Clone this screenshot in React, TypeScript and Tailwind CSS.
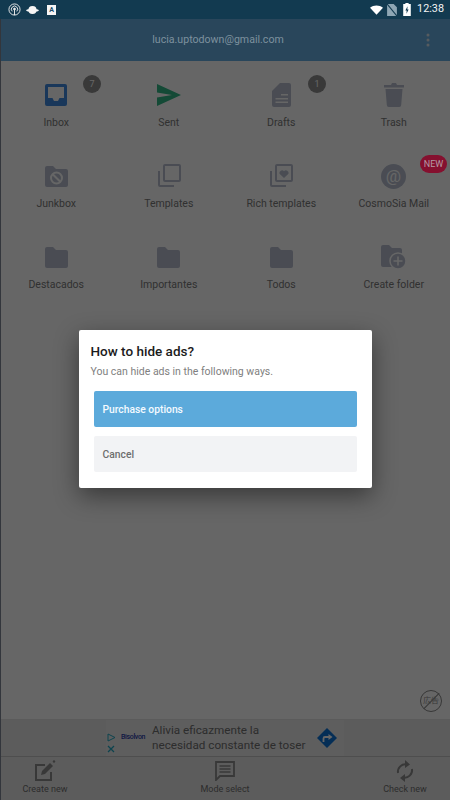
import type { ReactNode } from 'react';

const G = '#b8bfd0';

function InboxIcon() {
  return (
    <svg width="24" height="24" viewBox="0 0 24 24">
      <path fill="#3f8ae0" fillRule="evenodd" d="M3 1h18a2 2 0 0 1 2 2v18a2 2 0 0 1-2 2H3a2 2 0 0 1-2-2V3a2 2 0 0 1 2-2zM4 4v11h4.500l1.500 3h4l1.500-3H20V4z" />
    </svg>
  );
}

function SentIcon() {
  return (
    <svg width="24" height="22" viewBox="0 0 24 22">
      <path fill="#34b987" d="M0 0l24 11L0 22v-8.500L15 11 0 8.500z" />
    </svg>
  );
}

function DraftIcon() {
  return (
    <svg width="19" height="24" viewBox="0 0 19 24">
      <path fill={G} fillRule="evenodd" d="M8 0h9a2 2 0 0 1 2 2v20a2 2 0 0 1-2 2H2a2 2 0 0 1-2-2V8zM9 11v1.500h7V11zM3.500 15v1.500H16V15zM3.500 18.500V20H16v-1.500z" />
    </svg>
  );
}

function TrashIcon() {
  return (
    <svg width="20" height="24" viewBox="0 0 20 24">
      <path fill={G} d="M8 0h4l1 2h7v2.500H0V2h7zM1.500 6h17l-1.300 16a2 2 0 0 1-2 2H4.800a2 2 0 0 1-2-2z" />
    </svg>
  );
}

function FolderIcon() {
  return (
    <svg width="23" height="21" viewBox="0 0 23 21">
      <path fill={G} d="M2 0h6l3 3h10a2 2 0 0 1 2 2v14a2 2 0 0 1-2 2H2a2 2 0 0 1-2-2V2a2 2 0 0 1 2-2z" />
    </svg>
  );
}

function JunkIcon() {
  return (
    <svg width="23" height="21" viewBox="0 0 23 21">
      <path fill={G} d="M2 0h6l3 3h10a2 2 0 0 1 2 2v14a2 2 0 0 1-2 2H2a2 2 0 0 1-2-2V2a2 2 0 0 1 2-2z" />
      <circle cx="11.500" cy="12" r="5.500" fill="none" stroke="#ffffff" strokeWidth="2" />
      <path stroke="#ffffff" strokeWidth="2" d="M7.700 8.200l7.600 7.600" />
    </svg>
  );
}

function TemplateIcon({ heart }: { heart?: boolean }) {
  return (
    <svg width="24" height="24" viewBox="0 0 24 24" fill="none" stroke={G} strokeWidth="2">
      <rect x="7" y="1" width="16" height="16" rx="1" />
      <path d="M2 7v14a1 1 0 0 0 1 1h14" />
      {heart && <path fill={G} stroke="none" d="M15 14l-4.500-4.300a2.600 2.600 0 0 1 4.500-2.400 2.600 2.600 0 0 1 4.500 2.400z" />}
    </svg>
  );
}

function AtIcon() {
  return (
    <svg width="25" height="25" viewBox="0 0 25 25">
      <circle cx="12.500" cy="12.500" r="12.500" fill={G} />
      <text x="12.500" y="18" textAnchor="middle" fontSize="17" fontFamily="Roboto, sans-serif" fill="#ffffff">@</text>
    </svg>
  );
}

function CreateFolderIcon() {
  return (
    <svg width="25" height="24" viewBox="0 0 25 24">
      <path fill={G} d="M2 0h6l3 3h8a2 2 0 0 1 2 2v15a2 2 0 0 1-2 2H2a2 2 0 0 1-2-2V2a2 2 0 0 1 2-2z" />
      <circle cx="17" cy="16" r="8" fill={G} stroke="#ffffff" strokeWidth="1.500" />
      <path stroke="#ffffff" strokeWidth="1.600" d="M17 11.500v9M12.500 16h9" />
    </svg>
  );
}

function MailTile({ icon, label, badge, isNew }: { icon: ReactNode; label: string; badge?: string; isNew?: boolean }) {
  return (
    <div className="relative h-[81px] flex flex-col items-center">
      <div className="h-[28px] mt-[20px] flex items-center justify-center">{icon}</div>
      <span className="mt-[7px] text-[10.500px] leading-[14px] text-[#7a7a7a] whitespace-nowrap">{label}</span>
      {badge && (
        <span className="absolute left-[83px] top-[14px] w-[18px] h-[18px] rounded-full bg-[#8e8e8e] text-[#ffffff] text-[9px] leading-[18px] text-center">
          {badge}
        </span>
      )}
      {isNew && (
        <span className="absolute z-20 right-[3px] top-[13px] w-[27px] h-[18px] rounded-full bg-[#85102f] text-[#b59aa4] text-[9px] leading-[18px] text-center">
          NEW
        </span>
      )}
    </div>
  );
}

function BottomButton({ icon, label }: { icon: ReactNode; label: string }) {
  return (
    <div className="w-[90px] flex flex-col items-center">
      <div className="h-[24px] flex items-center justify-center">{icon}</div>
      <span className="text-[9px] leading-[12px] text-[#707070] whitespace-nowrap">{label}</span>
    </div>
  );
}

function StatusBar() {
  return (
    <div className="relative z-20 h-[19px] bg-[#123a50] flex items-center justify-between pl-[8px] pr-[6px]">
      <div className="flex items-center">
        <svg width="13" height="13" viewBox="0 0 14 14" fill="none" stroke="#f0f0f0">
          <circle cx="7" cy="7" r="6" />
          <path d="M4.500 9a3.400 3.400 0 1 1 5 0M7 7v6" />
          <circle cx="7" cy="6.500" r="1" fill="#f0f0f0" />
        </svg>
        <svg className="ml-[5px]" width="13" height="10" viewBox="0 0 14 11">
          <ellipse cx="7" cy="5.500" rx="4.500" ry="4.500" fill="#f5f5f5" />
          <ellipse cx="7" cy="6" rx="7" ry="1.700" fill="#f5f5f5" />
        </svg>
        <span className="ml-[8px] w-[9px] h-[10px] bg-[#f5f5f5] text-[#1b4a68] text-[7px] leading-[10px] font-bold text-center">A</span>
      </div>
      <div className="flex items-center">
        <svg width="13" height="10" viewBox="0 0 14 10">
          <path fill="#ffffff" d="M0 2.500C4-.8 10-.8 14 2.500L7 10z" />
        </svg>
        <svg className="ml-[4px]" width="10" height="12" viewBox="0 0 9 11">
          <path fill="#8ea6b4" d="M0 0h6l3 3v8H0z" />
          <path stroke="#123a50" strokeWidth="1" d="M0 0l9 11" />
        </svg>
        <svg className="ml-[6px]" width="8" height="13" viewBox="0 0 7 12">
          <path fill="#ffffff" d="M2 0h3v1h2v11H0V1h2z" />
          <path fill="#123a50" d="M4 3L2 7h1.200L3 10l2-4H3.800z" />
        </svg>
        <span className="ml-[6px] text-[#f4f4f4] text-[10.800px] leading-none">12:38</span>
      </div>
    </div>
  );
}

function AdBanner() {
  return (
    <div className="h-[38px] border-t border-[#e4e4e4] border-b border-b-[#c4c4c4] bg-[#e6e6e6] flex justify-center">
      <div className="w-[238px] bg-[#ebebeb] flex items-center">
        <div className="w-[8px] ml-[1px] flex flex-col items-center">
          <svg className="mt-[10px]" width="9" height="9" viewBox="0 0 9 9" fill="none" stroke="#22a9c4">
            <path d="M1 1l7 3.500L1 8z" />
          </svg>
          <svg className="mt-[3px]" width="8" height="8" viewBox="0 0 8 8" stroke="#22a9c4" strokeWidth="1.300">
            <path d="M1 1l6 6M7 1L1 7" />
          </svg>
        </div>
        <span className="ml-[6px] w-[27px] mt-[-1px] text-[7px] tracking-tighter text-[#2a3ca8] font-medium">Bisolvon</span>
        <div className="ml-[4px] text-[11.700px] leading-[15px] text-[#707070] whitespace-nowrap">
          <div>Alivia eficazmente la</div>
          <div>necesidad constante de toser</div>
        </div>
        <svg className="ml-[12px]" width="20" height="20" viewBox="0 0 20 20">
          <path fill="#0d74d8" d="M10 0l10 10-10 10L0 10z" />
          <path fill="none" stroke="#ffffff" strokeWidth="1.800" d="M6.500 14v-3.500a1.500 1.500 0 0 1 1.500-1.500h5" />
          <path fill="#ffffff" d="M11.500 6l4 3-4 3z" />
        </svg>
      </div>
    </div>
  );
}

export default function App() {
  return (
    <div className="relative w-[450px] h-[800px] overflow-hidden bg-[#ffffff] font-['Roboto',sans-serif] flex flex-col">
      <StatusBar />

      {/* Account header */}
      <div className="h-[42px] bg-[#68b0e4] flex items-center">
        <span className="relative z-20 flex-1 pl-[10px] text-center text-[10.600px] text-[#7d919e]">lucia.uptodown@gmail.com</span>
        <svg className="mr-[20px]" width="4" height="14" viewBox="0 0 4 14" fill="#d6e4ee">
          <circle cx="2" cy="2" r="1.500" />
          <circle cx="2" cy="7" r="1.500" />
          <circle cx="2" cy="12" r="1.500" />
        </svg>
      </div>

      {/* Folder grid */}
      <div className="grid grid-cols-4">
        <MailTile icon={<InboxIcon />} label="Inbox" badge="7" />
        <MailTile icon={<SentIcon />} label="Sent" />
        <MailTile icon={<DraftIcon />} label="Drafts" badge="1" />
        <MailTile icon={<TrashIcon />} label="Trash" />
        <MailTile icon={<JunkIcon />} label="Junkbox" />
        <MailTile icon={<TemplateIcon />} label="Templates" />
        <MailTile icon={<TemplateIcon heart />} label="Rich templates" />
        <MailTile icon={<AtIcon />} label="CosmoSia Mail" isNew />
        <MailTile icon={<FolderIcon />} label="Destacados" />
        <MailTile icon={<FolderIcon />} label="Importantes" />
        <MailTile icon={<FolderIcon />} label="Todos" />
        <MailTile icon={<CreateFolderIcon />} label="Create folder" />
      </div>

      {/* Hide ads button + ad */}
      <div className="mt-auto">
        <div className="flex justify-end pr-[8px] pb-[7px]">
          <div className="w-[22px] h-[22px] rounded-full border border-[#8a8a8a] relative flex items-center justify-center text-[8px] text-[#8a8a8a]">
            広告
            <span className="absolute left-[10px] top-[-1px] w-[1px] h-[22px] bg-[#8a8a8a] rotate-45" />
          </div>
        </div>
        <AdBanner />
        <div className="h-[43px] bg-[#e6e6e6] flex justify-between items-start pt-[2px]">
          <BottomButton
            label="Create new"
            icon={
              <svg width="22" height="22" viewBox="0 0 22 22" fill="none" stroke="#8c8c8c" strokeWidth="2">
                <path d="M11 5H2v15h15v-8" />
                <path fill="#8c8c8c" stroke="none" d="M7 15l1-4 8-8 3 3-8 8z" />
                <circle cx="20" cy="1.500" r="1.200" fill="#8c8c8c" stroke="none" />
              </svg>
            }
          />
          <BottomButton
            label="Mode select"
            icon={
              <svg width="20" height="20" viewBox="0 0 20 20" fill="none" stroke="#8c8c8c" strokeWidth="1.800">
                <path d="M1 1h18v14H5l-4 4z" />
                <path strokeWidth="1.500" d="M4.500 5h11M4.500 8h11M4.500 11h11" />
              </svg>
            }
          />
          <BottomButton
            label="Check new"
            icon={
              <svg width="18" height="22" viewBox="0 0 18 22" fill="none" stroke="#8c8c8c" strokeWidth="2">
                <path d="M2 13a7.500 7.500 0 0 1 9-8.500M16 9a7.500 7.500 0 0 1-9 8.500" />
                <path fill="#8c8c8c" stroke="none" d="M9 0l5 4.500L9 8zM9 14v8l-5-4z" />
              </svg>
            }
          />
        </div>
      </div>

      {/* Dim layer with the dialog over it; the status bar stays above it */}
      <div className="absolute z-10 inset-x-0 top-[19px] bottom-0 bg-black/60 border-l border-l-[#33363c] flex items-center justify-center">
        <div className="w-[293px] h-[158px] mr-[1px] mb-[1px] bg-white rounded-[2px] shadow-[0_8px_24px_rgba(0,0,0,0.45)] flex flex-col px-[15px]">
          <h2 className="mt-[13px] ml-[-3px] text-[13.500px] leading-[17px] font-medium text-[#1b1b1b]">How to hide ads?</h2>
          <p className="mt-[5px] ml-[-3px] text-[10.500px] leading-[14px] text-[#808080]">You can hide ads in the following ways.</p>
          <div className="mt-[12px] h-[36px] rounded-[2px] bg-[#5caadb] pl-[9px] pt-[2px] flex items-center text-[10.300px] font-medium text-[#f4faff]">
            Purchase options
          </div>
          <div className="mt-[9px] h-[36px] rounded-[2px] bg-[#f2f3f5] pl-[9px] pt-[2px] flex items-center text-[10.300px] font-medium text-[#6e6e6e]">
            Cancel
          </div>
        </div>
      </div>
    </div>
  );
}
